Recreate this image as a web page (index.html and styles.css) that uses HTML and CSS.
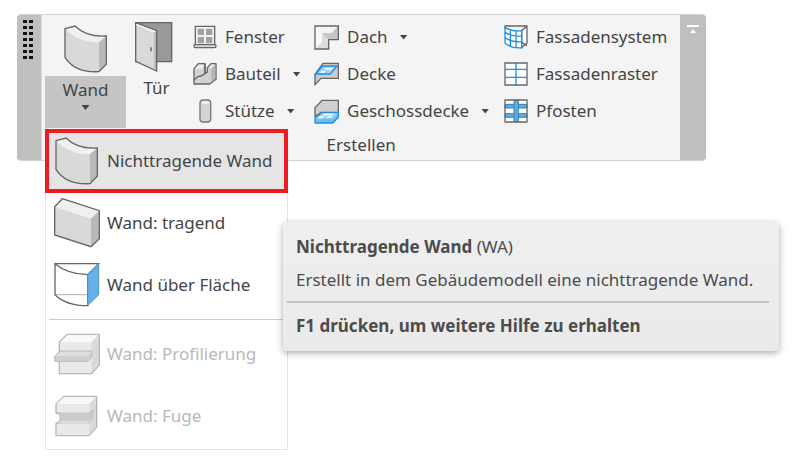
FILE: index.html
```
<!DOCTYPE html>
<html lang="de">
<head>
<meta charset="utf-8">
<title>Erstellen</title>
<link rel="stylesheet" href="styles.css">
</head>
<body>
<svg class="defs" aria-hidden="true">
  <defs>
    <symbol id="wall" viewBox="0 0 138 150">
      <path fill="#d9d9d9" d="M6 14 36 6Q70 40 130 36V121L108 143C55 146 25 130 6 100Z"/>
      <path fill="#f0f0f0" d="M6 14 36 6Q70 40 130 36L108 55Q45 55 6 14Z"/>
      <path fill="#b9b9b9" d="M108 55 130 36V121L108 143Z"/>
      <path fill="none" stroke="#666" stroke-width="4" d="M6 14 36 6Q70 40 130 36V121L108 143C55 146 25 130 6 100Z"/>
    </symbol>
  </defs>
</svg>
<main class="stage">
  <section class="ribbon" aria-label="Erstellen">
    <div class="grip"><span class="dots"></span></div>
    <div class="panel">
      <div class="tools">
        <div class="large wand">
          <button class="large-icon" type="button" aria-label="Wand zeichnen"><svg width="46" height="50"><use href="#wall"/></svg></button>
          <button class="large-label open" type="button">Wand<span class="arrow"></span></button>
        </div>
        <button class="large door" type="button">
          <span class="large-icon"><svg width="40" height="50" viewBox="0 0 120 150"><path fill="#999" stroke="#666" stroke-width="4" d="M5 2H113V119H5Z"/><path fill="#d9d9d9" stroke="#666" stroke-width="4" d="M5 2 68 26V147L5 118Z"/><path fill="#bbb" d="M60 25 66 28V144L60 141Z"/><path fill="#f2f2f2" d="M7 5 66 28 60 32 7 10Z"/><path stroke="#555" stroke-width="4" d="M51 76V88"/></svg></span>
          <span class="large-label">Tür</span>
        </button>
        <div class="column">
          <button class="tool" type="button"><svg width="24" height="24" viewBox="0 0 72 72"><path fill="#f2f2f2" stroke="#666" stroke-width="4" d="M7 4H65V60H7Z"/><path fill="#a2a2a2" d="M14 11H33V30H14ZM39 11H58V30H39ZM14 36H33V55H14ZM39 36H58V55H39Z"/><rect x="3" y="59" width="66" height="9" rx="4" fill="#ddd" stroke="#666" stroke-width="4"/></svg>Fenster</button>
          <button class="tool" type="button"><svg width="24" height="24" viewBox="0 0 72 72"><path fill="#d2d2d2" stroke="#666" stroke-width="4" stroke-linejoin="round" d="M3 20 16 5H36V34L43 30V18L54 5H69V52L50 66H3Z"/><path fill="#f0f0f0" d="M6 20 17 8H33L26 20ZM46 18 55 8H66L54 18Z"/><path fill="#b5b5b5" d="M55 19 67 8V51L55 60Z"/><path fill="none" stroke="#666" stroke-width="4" stroke-linejoin="round" d="M36 5V34Q28 43 14 44L3 54M36 34 43 30"/></svg>Bauteil<span class="arrow"></span></button>
          <button class="tool" type="button"><svg width="24" height="24" viewBox="0 0 72 72"><rect x="21" y="3" width="32" height="66" rx="9" fill="#d4d4d4" stroke="#777" stroke-width="4"/><path fill="#eee" d="M24 12Q26 5 37 5T50 12Q37 20 24 12Z"/></svg>Stütze<span class="arrow"></span></button>
        </div>
        <div class="column">
          <button class="tool" type="button"><svg width="25" height="25" viewBox="0 0 75 75"><path fill="#eee" d="M3 3H73V44H44V72H3Z"/><path fill="#fafafa" d="M3 3 24 24V52L3 72Z"/><path fill="#dcdcdc" d="M3 72 24 52V24L44 44V72Z"/><path fill="#c6c6c6" d="M24 24H52L73 3V44H44Z"/><path fill="#f4f4f4" d="M3 3H73L52 24H24Z"/><path fill="none" stroke="#666" stroke-width="4" d="M3 3H73V44H44V72H3Z"/></svg>Dach<span class="arrow"></span></button>
          <button class="tool" type="button"><svg width="25" height="25" viewBox="0 0 75 75"><path fill="#ccc" stroke="#666" stroke-width="4" d="M3 37 27 4H73V49H21L3 68Z"/><path fill="#9bd2fb" stroke="#1d91e8" stroke-width="4" d="M5 36 26 12H69L49 36Z"/><path fill="#fff" d="M36 17H58L52 23H32ZM23 27H35L30 32H18Z"/></svg>Decke</button>
          <button class="tool" type="button"><svg width="25" height="25" viewBox="0 0 75 75"><path fill="#d0d0d0" stroke="#666" stroke-width="4" d="M3 53V26L24 4H73V40H22Z"/><path fill="#6bbbf5" stroke="#1d91e8" stroke-width="4" d="M3 59 24 41H73V55L56 72H3Z"/><path fill="#9bd2fb" d="M5 59 24 43H71L56 59Z"/><path fill="#fff" d="M31 44H59L53 49H27ZM18 52H32L25 58H10ZM42 52H55L50 57H38Z"/></svg>Geschossdecke<span class="arrow"></span></button>
        </div>
        <div class="column">
          <button class="tool" type="button"><svg width="24" height="24" viewBox="0 0 72 72"><path fill="#fff" stroke="#666" stroke-width="4" d="M3 9V3H69V54L53 68V17L69 3M53 52L69 62"/><path fill="#fff" stroke="#1d91e8" stroke-width="4" d="M3 7Q24 21 53 17V68Q22 71 3 54ZM19 14V64M36 18V68M3 22Q24 36 53 33M3 38Q24 53 53 50"/></svg>Fassadensystem</button>
          <button class="tool" type="button"><svg width="24" height="24" viewBox="0 0 72 72"><path fill="#fff" d="M3 3H69V69H3Z"/><path fill="none" stroke="#1d91e8" stroke-width="4" d="M36 3V69M3 22H69M3 46H69"/><path fill="none" stroke="#666" stroke-width="4" d="M3 3H69V69H3Z"/></svg>Fassadenraster</button>
          <button class="tool" type="button"><svg width="24" height="24" viewBox="0 0 72 72"><path fill="#fff" d="M3 3H69V69H3Z"/><path fill="#5aaee5" stroke="#3c80b0" stroke-width="3" d="M3 16H69V27H3ZM3 44H69V55H3Z"/><path fill="#5aaee5" stroke="#3c80b0" stroke-width="3" d="M30 4H43V68H30Z"/><path fill="none" stroke="#666" stroke-width="4" d="M3 3H69V69H3Z"/></svg>Pfosten</button>
        </div>
      </div>
      <div class="panel-title">Erstellen</div>
    </div>
    <button class="collapse" type="button" aria-label="Minimieren"><svg width="12" height="10" viewBox="0 0 12 10"><path fill="#fff" d="M0 1H12V3H0ZM6 5 9 9H3Z"/></svg></button>
  </section>

  <div class="menu">
    <button class="item active" type="button"><svg width="46" height="50"><use href="#wall"/></svg>Nichttragende Wand</button>
    <button class="item" type="button"><svg width="46" height="50" viewBox="0 0 138 150"><path fill="#d9d9d9" d="M2 26 25 2 136 38V122L111 146 2 111Z"/><path fill="#f0f0f0" d="M2 26 25 2 136 38 111 62Z"/><path fill="#b9b9b9" d="M111 62 136 38V122L111 146Z"/><path fill="none" stroke="#666" stroke-width="4" d="M2 26 25 2 136 38V122L111 146 2 111Z"/></svg>Wand: tragend</button>
    <button class="item" type="button"><svg width="46" height="50" viewBox="0 0 138 150"><path fill="#fff" stroke="#666" stroke-width="4" d="M3 11H134L101 44Q40 42 3 11V104Q36 137 101 137V44"/><path stroke="#888" stroke-width="2" d="M3 104H100"/><path fill="#66b2e8" stroke="#4593c9" stroke-width="3" d="M101 44 134 11V104L101 137Z"/></svg>Wand über Fläche</button>
    <hr class="rule">
    <button class="item" type="button" disabled><svg width="46" height="50" viewBox="0 0 138 150"><path fill="#e9e9e9" d="M16 39 39 16H136V109L113 134H16Z"/><path fill="#f8f8f8" d="M16 39 39 16H136L113 39Z"/><path fill="#dadada" d="M113 39 136 16V109L113 134Z"/><path fill="none" stroke="#b8b8b8" stroke-width="4" d="M16 39 39 16H136V109L113 134H16Z"/><path fill="#d0d0d0" stroke="#b8b8b8" stroke-width="3" d="M2 82 18 66H114V82L101 97H2Z"/><path fill="#dedede" d="M4 81 18 68H112L100 81Z"/></svg>Wand: Profilierung</button>
    <button class="item" type="button" disabled><svg width="46" height="50" viewBox="0 0 138 150"><path fill="#e9e9e9" stroke="#b8b8b8" stroke-width="4" d="M6 39 29 16H128V109L105 134H6V98L18 91V70L6 66Z"/><path fill="#f8f8f8" d="M8 39 30 18H125L105 39Z"/><path fill="#dadada" d="M106 39 126 19V108L106 132Z"/><path fill="#cacaca" d="M20 67H106L120 54V78L106 91H20Z"/><path fill="none" stroke="#b8b8b8" stroke-width="2" d="M6 66H106L119 54M6 96H105L119 84"/></svg>Wand: Fuge</button>
  </div>

  <div class="tooltip" role="tooltip">
    <p class="tip-line"><b>Nichttragende Wand</b> (WA)</p>
    <p class="tip-line">Erstellt in dem Gebäudemodell eine nichttragende Wand.</p>
    <p class="tip-help">F1 drücken, um weitere Hilfe zu erhalten</p>
  </div>
</main>
</body>
</html>
```
FILE: styles.css
```
* { box-sizing: border-box; }
body {
  margin: 0;
  background: #fff;
  color: #444;
  font: 17px/24px "Noto Sans", "Open Sans", sans-serif;
}
button {
  margin: 0;
  padding: 0;
  border: 0;
  background: none;
  color: inherit;
  font: inherit;
  text-align: left;
  white-space: nowrap;
}
svg { display: block; flex: none; }
.defs { position: absolute; width: 0; height: 0; }
.stage { position: relative; padding: 14px 17px; min-height: 100vh; }

.ribbon {
  display: flex;
  width: 90%;
  border-radius: 4px;
  border-top: 1px solid #d2d2d2;
  border-bottom: 1px solid #d2d2d2;
  background: #f4f4f4;
  overflow: hidden;
}
.grip { flex: none; width: 25px; padding: 5px 6px; background: #bfbfbf; border-right: 1px solid #ddd; }
.dots {
  display: block;
  width: 10px;
  height: 42px;
  background: repeating-linear-gradient(#0000 0 3px, #bfbfbf 3px 6px), repeating-linear-gradient(90deg, #111 0 4px, #bfbfbf 4px 6px);
}
.panel { flex: 1; min-width: 0; }
.tools { display: flex; padding: 3px 3px 0; }
.column { display: flex; flex-direction: column; gap: 1px; padding-top: 1px; }
.column:nth-child(3) { width: 121px; margin-left: 6px; }
.column:nth-child(4) { width: 190px; }
.tool { display: flex; align-items: center; gap: 8px; height: 36px; }
.arrow {
  width: 8px;
  height: 5px;
  margin-left: 4px;
  background: #444;
  clip-path: polygon(0 0, 100% 0, 50% 100%);
}
.large { display: flex; flex-direction: column; align-items: center; }
.wand { width: 81px; }
.door { width: 61px; }
.large-icon { height: 58px; padding-top: 4px; }
.door .large-icon { width: 100%; padding-left: 8px; }
.large-label { height: 52px; width: 100%; text-align: center; }
.open { display: flex; flex-direction: column; align-items: center; justify-content: flex-start; background: #c5c5c5; padding-top: 2px; }
.open .arrow { margin: 3px 0 0; }
.panel-title { text-align: center; height: 31px; padding-top: 4px; }
.collapse { display: flex; justify-content: center; flex: none; width: 26px; padding-top: 9px; background: #bfbfbf; }

.menu {
  position: absolute;
  left: 45px;
  top: 129px;
  width: 243px;
  background: #fff;
  border: 1px solid #e4e4e4;
  padding-bottom: 2px;
}
.item { display: flex; align-items: center; gap: 7px; width: 100%; height: 62px; padding-left: 8px; color: #444; }
.item:disabled { color: #b8b8b8; }
.active { background: #e5e5e5; outline: 4px solid #ed1c24; outline-offset: -3px; }
.rule { height: 1px; margin: 3px; border: 0; background: #ccc; }

.tooltip {
  position: absolute;
  left: 283px;
  top: 222px;
  width: 496px;
  padding: 13px 10px 13px 4px;
  border-radius: 4px;
  background: linear-gradient(#efefef, #eaeaea);
  box-shadow: 0 2px 7px #0005;
  color: #4c4c4c;
  white-space: nowrap;
}
.tip-line { margin: 0 0 9px; padding-left: 9px; }
.tip-help { margin: 0; padding: 11px 0 0 9px; border-top: 2px solid #c2c2c2; font-weight: bold; }
```
